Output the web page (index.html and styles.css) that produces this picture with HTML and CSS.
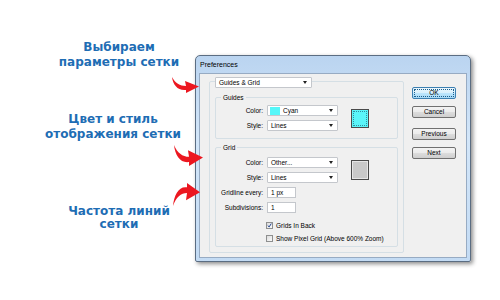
FILE: index.html
```html
<!DOCTYPE html>
<html lang="ru">
<head>
    <meta charset="UTF-8">
    <title>Preferences - Guides &amp; Grid</title>
    <link rel="stylesheet" href="styles.css">
</head>
<body>
    <div class="scene">
        <div class="notes">
            <p class="note note-first">Выбираем<br>параметры сетки</p>
            <svg class="arrow arrow-1" viewBox="0 0 27 16" preserveAspectRatio="none">
                <path d="M0,0 C3,6 8,9 14,9 L13,4 L27,9.5 L14,16 L14,13 C6,14 1,8 0,0 Z"/>
            </svg>
            <p class="note note-mid">Цвет и стиль<br>отображения сетки</p>
            <svg class="arrow arrow-2" viewBox="0 0 27 16" preserveAspectRatio="none">
                <path d="M0,0 C3,6 8,9 14,9 L13,4 L27,9.5 L14,16 L14,13 C6,14 1,8 0,0 Z"/>
            </svg>
            <svg class="arrow arrow-3" viewBox="0 0 27 16" preserveAspectRatio="none">
                <g transform="translate(0,16) scale(1,-1)">
                    <path d="M0,0 C3,6 8,9 14,9 L13,4 L27,9.5 L14,16 L14,13 C6,14 1,8 0,0 Z"/>
                </g>
            </svg>
            <p class="note note-last">Частота линий<br>сетки</p>
        </div>

        <div class="window">
            <div class="titlebar">Preferences</div>
            <div class="content">
                <div class="panel">
                    <div class="combo combo-section">
                        <span class="combo-text">Guides &amp; Grid</span>
                        <span class="combo-arrow"></span>
                    </div>

                    <div class="group group-guides">
                        <div class="legend">Guides</div>
                        <div class="fields">
                            <span class="label">Color:</span>
                            <div class="combo">
                                <span class="chip"></span>
                                <span class="combo-text">Cyan</span>
                                <span class="combo-arrow"></span>
                            </div>
                            <div class="swatch swatch-cyan"></div>
                            <span class="label">Style:</span>
                            <div class="combo">
                                <span class="combo-text">Lines</span>
                                <span class="combo-arrow"></span>
                            </div>
                        </div>
                    </div>

                    <div class="group group-grid">
                        <div class="legend">Grid</div>
                        <div class="fields">
                            <span class="label">Color:</span>
                            <div class="combo">
                                <span class="combo-text">Other...</span>
                                <span class="combo-arrow"></span>
                            </div>
                            <div class="swatch swatch-gray"></div>
                            <span class="label">Style:</span>
                            <div class="combo">
                                <span class="combo-text">Lines</span>
                                <span class="combo-arrow"></span>
                            </div>
                            <span class="label">Gridline every:</span>
                            <div class="input">1 px</div>
                            <span class="label">Subdivisions:</span>
                            <div class="input">1</div>
                        </div>
                        <div class="checks">
                            <label class="check">
                                <span class="box">
                                    <svg viewBox="0 0 7 7"><path d="M1,3.5 L3,5.5 L6,0.8"/></svg>
                                </span>
                                Grids In Back
                            </label>
                            <label class="check">
                                <span class="box"></span>
                                Show Pixel Grid (Above 600% Zoom)
                            </label>
                        </div>
                    </div>
                </div>

                <div class="buttons">
                    <button class="btn btn-default">OK</button>
                    <button class="btn">Cancel</button>
                    <button class="btn btn-gap">Previous</button>
                    <button class="btn">Next</button>
                </div>
            </div>
        </div>
    </div>
</body>
</html>
```

FILE: styles.css
```css
:root {
    --note-blue: #1e6db4;
    --arrow-red: #ec1720;
    --frame: #c3dbf4;
    --face: #f0f0f0;
    --group-line: #d5dfe5;
}

body {
    margin: 0;
    background: #fff;
    font-family: 'Liberation Sans', Arial, sans-serif;
}

.scene {
    display: flex;
    align-items: flex-start;
    width: 500px;
    height: 300px;
    overflow: hidden;
}

/* left side captions */
.notes {
    width: 195px;
    flex: none;
    display: flex;
    flex-direction: column;
}

.note {
    margin: 0 0 0 40px;
    width: 158px;
    text-align: center;
    font-family: 'DejaVu Sans', Verdana, sans-serif;
    font-weight: bold;
    font-size: 12px;
    line-height: 15px;
    color: var(--note-blue);
}

.note-first { margin-top: 40px; }
.note-mid { margin-top: 19px; width: 146px; }
.note-last { margin-top: -1px; line-height: 13px; }

.arrow {
    display: block;
    position: relative;
    z-index: 1;
    fill: var(--arrow-red);
}

.arrow-1 { width: 27px; height: 16px; margin: 7px 0 0 172px; }
.arrow-2 { width: 29px; height: 21px; margin: 3px 0 0 174px; }
.arrow-3 { width: 27px; height: 23px; margin: 17px 0 0 173px; }

/* dialog window */
.window {
    margin-top: 55px;
    width: 276px;
    height: 207px;
    box-sizing: border-box;
    display: flex;
    flex-direction: column;
    padding: 0 3px 3px;
    border: 1px solid #5b6d82;
    border-radius: 5px 5px 2px 2px;
    background: linear-gradient(to bottom, #bad4f0, #d3e6f9 40%, var(--frame));
    box-shadow: 2px 2px 4px rgba(0, 0, 0, 0.45);
}

.titlebar {
    height: 17px;
    line-height: 17px;
    padding-left: 1px;
    font-size: 7px;
    color: #000;
}

.content {
    flex: 1;
    display: flex;
    align-items: flex-start;
    background: var(--face);
    border: 1px solid #97abc3;
    font-size: 6.5px;
    color: #000;
}

.panel {
    width: 195px;
    box-sizing: border-box;
    margin: 7px 0 0 9px;
    padding: 0 5px 5px;
    border: 1px solid var(--group-line);
    border-radius: 2px;
}

.combo {
    height: 11px;
    box-sizing: border-box;
    display: flex;
    align-items: center;
    background: #fff;
    border: 1px solid #c4c7cc;
    border-radius: 1px;
}

.combo-text {
    flex: 1;
    padding-left: 3px;
    white-space: nowrap;
}

.combo-arrow {
    width: 0;
    height: 0;
    margin-right: 4px;
    border-left: 2.5px solid transparent;
    border-right: 2.5px solid transparent;
    border-top: 3px solid #222;
}

.combo-section {
    width: 97px;
    margin-top: -5px;
}

.chip {
    width: 10px;
    height: 8px;
    margin-left: 2px;
    background: #55f7f9;
}

.chip + .combo-text { padding-left: 3px; }

.group {
    border: 1px solid var(--group-line);
    border-radius: 2px;
}

.group-guides {
    margin-top: 9px;
    padding-bottom: 7px;
}

.group-grid {
    margin-top: 8px;
    padding-bottom: 2px;
}

.legend {
    display: inline-block;
    margin: -5px 0 0 5px;
    padding: 0 2px;
    height: 9px;
    line-height: 9px;
    vertical-align: top;
    background: var(--face);
}

.fields {
    display: grid;
    grid-template-columns: 47px 71px 18px;
    grid-auto-rows: 11px;
    column-gap: 4px;
    row-gap: 4px;
}

.group-grid .fields { margin-top: 2px; }

.label {
    grid-column: 1;
    text-align: right;
    line-height: 11px;
    white-space: nowrap;
}

.fields .combo,
.fields .input {
    grid-column: 2;
}

.input {
    width: 29px;
    height: 11px;
    box-sizing: border-box;
    padding-left: 3px;
    line-height: 9px;
    background: #fff;
    border: 1px solid #c4c7cc;
}

.swatch {
    grid-column: 3;
    grid-row: 1 / span 2;
    align-self: center;
    width: 18px;
    height: 19px;
    margin-left: 9px;
    box-sizing: border-box;
    border: 1px solid #4a4a4a;
}

.swatch-cyan {
    background: #5af5f9;
    outline: 1px dotted #2f8fa0;
    outline-offset: -3px;
}

.swatch-gray {
    height: 20px;
    background: #c9c9c9;
    box-shadow: inset 0 0 0 1px #e6e6e6;
}

.checks {
    margin: 6px 0 0 50px;
    display: flex;
    flex-direction: column;
    gap: 1px;
}

.check {
    height: 12px;
    display: flex;
    align-items: center;
    gap: 3px;
    white-space: nowrap;
}

.box {
    width: 7px;
    height: 7px;
    box-sizing: border-box;
    border: 1px solid #8e8f8f;
    background: linear-gradient(135deg, #dcdcdc, #fafafa);
}

.box svg {
    display: block;
    width: 5px;
    height: 5px;
    fill: none;
    stroke: #1c3f8c;
    stroke-width: 1.4;
}

/* button column */
.buttons {
    margin: 13px 0 0 8px;
    display: flex;
    flex-direction: column;
    gap: 7px;
}

.btn {
    width: 44px;
    height: 12px;
    padding: 0;
    font-family: inherit;
    font-size: 6.5px;
    line-height: 10px;
    color: #000;
    border: 1px solid #707070;
    border-radius: 2px;
    background: linear-gradient(to bottom, #f3f3f3, #ebebeb 50%, #dddddd 50%, #cfcfcf);
}

.btn-default {
    border-color: #3c7fb1;
    background: linear-gradient(to bottom, #eaf6fd, #d9f0fc 50%, #bee6fd 50%, #a7d9f5);
    outline: 1px dotted #1b5e8c;
    outline-offset: -3px;
}

.btn-gap { margin-top: 3px; }
```
